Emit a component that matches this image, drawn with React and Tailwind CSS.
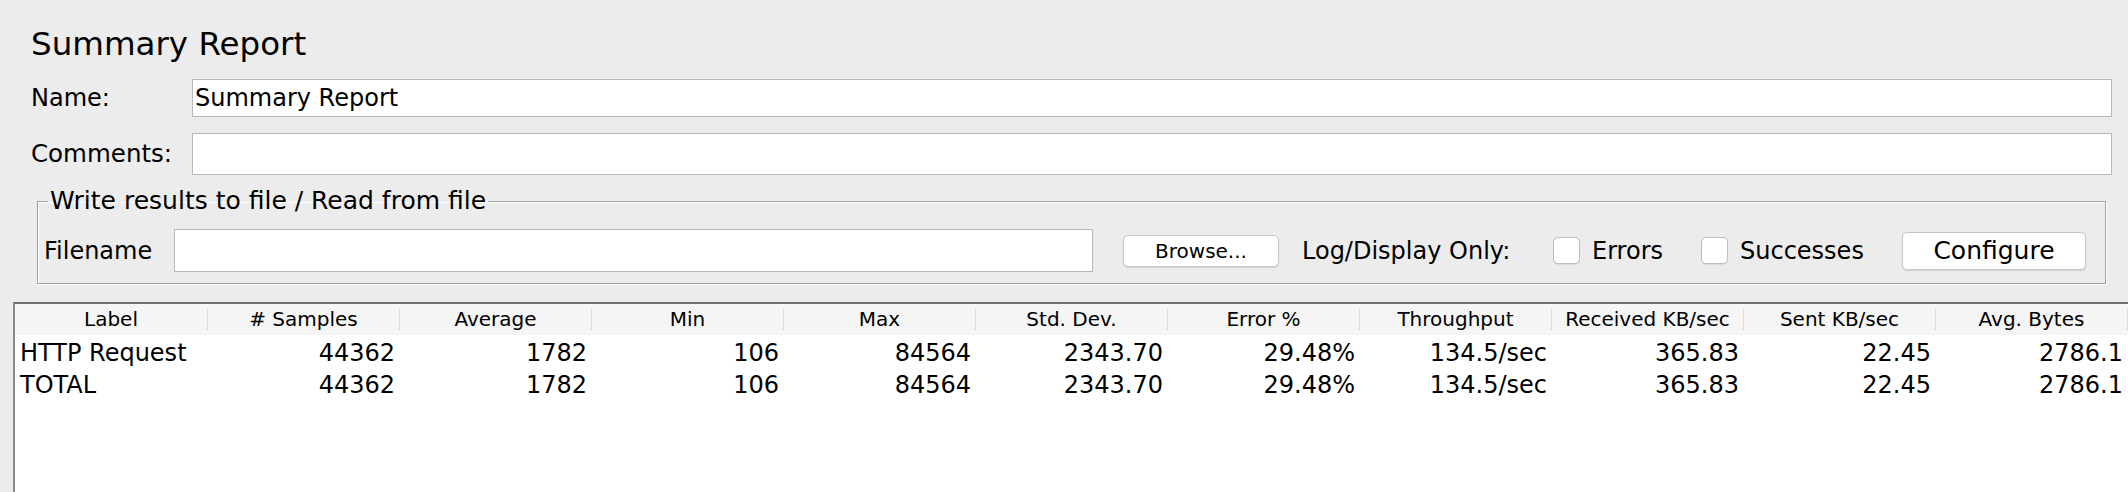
const columns = [
  'Label',
  '# Samples',
  'Average',
  'Min',
  'Max',
  'Std. Dev.',
  'Error %',
  'Throughput',
  'Received KB/sec',
  'Sent KB/sec',
  'Avg. Bytes',
]

const rows = [
  ['HTTP Request', '44362', '1782', '106', '84564', '2343.70', '29.48%', '134.5/sec', '365.83', '22.45', '2786.1'],
  ['TOTAL', '44362', '1782', '106', '84564', '2343.70', '29.48%', '134.5/sec', '365.83', '22.45', '2786.1'],
]

function TextField({ value, height }) {
  return (
    <div
      className={`flex-1 bg-white border border-[#b8b8b8] pl-[2px] text-[24px] whitespace-nowrap overflow-hidden ${height}`}
    >
      {value}
    </div>
  )
}

function Checkbox() {
  return (
    <div className="w-[27px] h-[27px] shrink-0 rounded-[5px] bg-white border border-[#bcbcbc] shadow-[0_1px_1px_rgba(0,0,0,0.08)]" />
  )
}

export default function App() {
  return (
    <div className="w-[2128px] h-[492px] overflow-hidden bg-[#ececec] text-black flex flex-col font-['DejaVu_Sans','Liberation_Sans',sans-serif]">
      {/* Title */}
      <div className="mt-[25px] pl-[31px] h-[38px] leading-[38px] text-[32.5px]">Summary Report</div>

      {/* Name / Comments */}
      <div className="mt-[16px] flex pl-[31px] pr-[16px] h-[38px]">
        <div className="w-[161px] text-[24px] leading-[38px]">Name:</div>
        <TextField value="Summary Report" height="h-[38px] leading-[36px]" />
      </div>
      <div className="mt-[16px] flex pl-[31px] pr-[16px] h-[42px]">
        <div className="w-[161px] text-[24.5px] leading-[42px]">Comments:</div>
        <TextField value="" height="h-[42px] leading-[40px]" />
      </div>

      {/* Write results to file */}
      <div className="mt-[12px] ml-[37px] w-[2069px]">
        <fieldset className="w-full min-w-0 box-border border border-[#a0a0a0] shadow-[inset_1px_1px_0_#ffffff,1px_1px_0_#ffffff] pl-[6px] pt-[14px] pb-[11px]">
          <legend className="ml-[4px] px-[2px] text-[25px] leading-[28px]">Write results to file / Read from file</legend>
          <div className="flex items-center h-[43px] text-[24px]">
            <div className="w-[130px] shrink-0">Filename</div>
            <div className="w-[919px] h-[43px] shrink-0 bg-white border border-[#b8b8b8]" />
            <button className="ml-[30px] w-[156px] h-[32px] shrink-0 rounded-[5px] bg-white border border-[#c6c6c6] shadow-[0_1px_1px_rgba(0,0,0,0.12)] text-[20px] leading-[30px]">
              Browse...
            </button>
            <div className="ml-[23px] w-[251px] shrink-0 whitespace-nowrap">Log/Display Only:</div>
            <Checkbox />
            <div className="ml-[12px] w-[109px] shrink-0">Errors</div>
            <Checkbox />
            <div className="ml-[12px] w-[162px] shrink-0">Successes</div>
            <button className="w-[184px] h-[38px] shrink-0 rounded-[5px] bg-white border border-[#c6c6c6] shadow-[0_1px_1px_rgba(0,0,0,0.12)] text-[25px] leading-[36px]">
              Configure
            </button>
          </div>
        </fieldset>
      </div>

      {/* Results table */}
      <div className="mt-[18px] ml-[13px] flex-1 bg-white border-t-2 border-l-2 border-t-[#707070] border-l-[#8a8a8a]">
        <div className="grid grid-cols-[193px_repeat(10,192px)] h-[31px] bg-[#f5f5f5]">
          {columns.map((col) => (
            <div key={col} className="flex items-center">
              <div className="flex-1 text-center text-[20px] leading-[31px] whitespace-nowrap">{col}</div>
              <div className="w-px h-[21px] bg-[#d9d9d9]" />
            </div>
          ))}
        </div>
        <div className="pt-[2px]">
          {rows.map((row) => (
            <div key={row[0]} className="grid grid-cols-[193px_repeat(10,192px)] h-[32px] text-[24px] leading-[32px]">
              {row.map((cell, i) => (
                <div
                  key={i}
                  className={`whitespace-nowrap ${i === 0 ? 'pl-[5px] text-left' : 'pr-[5px] text-right'}`}
                >
                  {cell}
                </div>
              ))}
            </div>
          ))}
        </div>
      </div>
    </div>
  )
}
